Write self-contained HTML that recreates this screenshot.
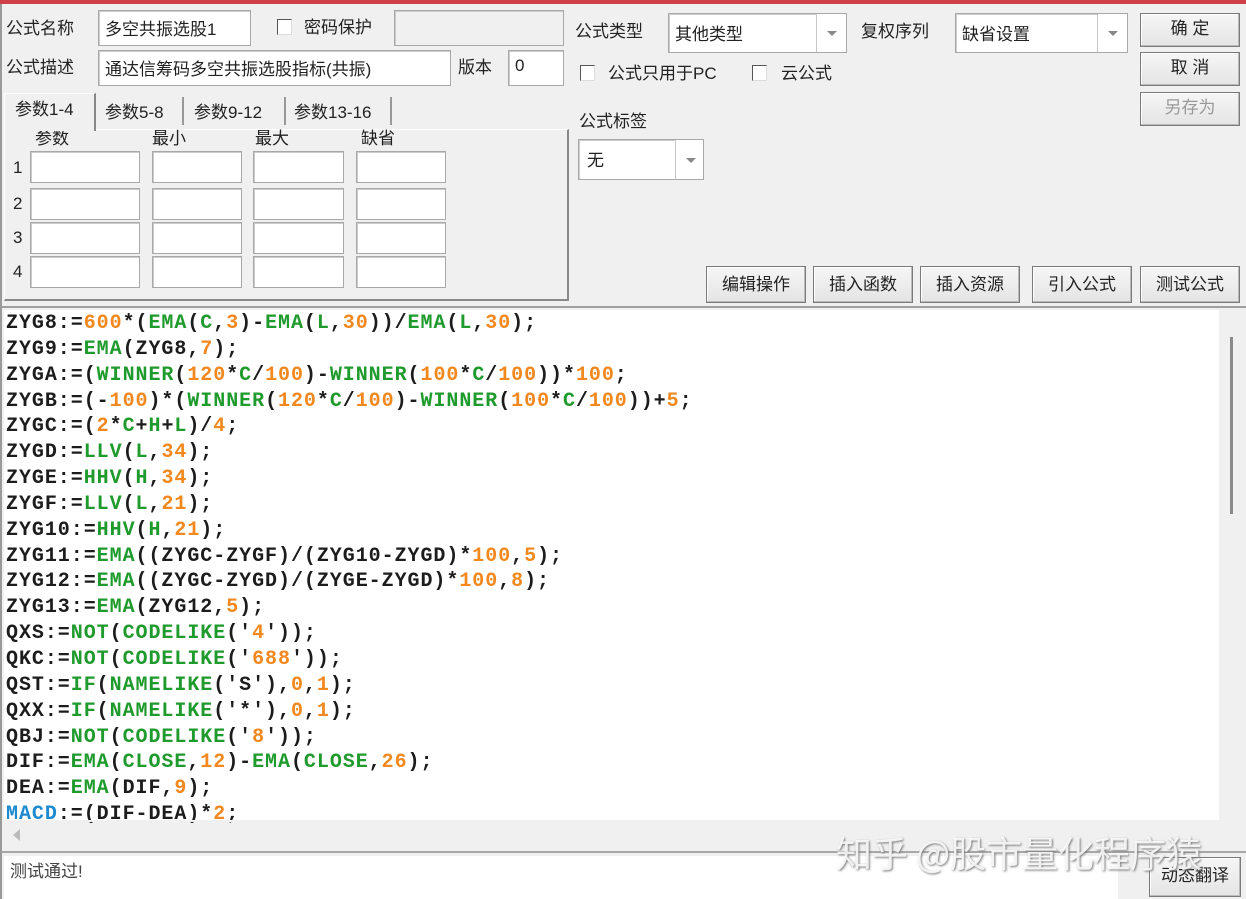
<!DOCTYPE html>
<html><head><meta charset="utf-8"><style>
*{margin:0;padding:0;box-sizing:border-box}
body{width:1246px;height:899px;background:#f0f0f0;position:relative;overflow:hidden;font-family:"Liberation Sans","Noto Sans CJK SC",sans-serif;font-size:17px;color:#222}
.a{position:absolute;white-space:nowrap}
.in{position:absolute;background:#fff;border:1px solid #a8a8a8;box-shadow:inset 1px 1px 0 #ccc}
.lbl{position:absolute;white-space:nowrap;font-size:17px;line-height:20px}
.btn{position:absolute;border:1px solid #7a7a7a;background:linear-gradient(#f6f6f6,#e4e4e4);box-shadow:inset -1px -1px 0 #bbb,inset 1px 1px 0 #fff;text-align:center;font-size:17px;line-height:30px;color:#222}
.cb{position:absolute;width:15px;height:16px;border:1px solid #555;border-right-color:#ddd;border-bottom-color:#ddd;background:#fff}
.dd{position:absolute;top:0;right:0;width:30px;height:100%;border-left:1px solid #c8c8c8;background:#fff}
.dd:after{content:"";position:absolute;left:10px;top:50%;margin-top:-2px;border-left:5px solid transparent;border-right:5px solid transparent;border-top:5px solid #888}
.code{position:absolute;left:6px;top:311px;font-family:"Liberation Mono",monospace;font-weight:bold;font-size:20px;letter-spacing:0.95px;line-height:25.85px;color:#1c1c1c;white-space:pre}
.g{color:#1f9a2c}.o{color:#f2881e}.b{color:#1d8ad0}
</style></head><body>
<div class="a" style="left:0;top:0;width:1246px;height:4px;background:#cf4049"></div>
<div class="a" style="left:0;top:4px;width:2px;height:895px;background:#9a9a9a"></div>

<div class="lbl" style="left:6px;top:19px">公式名称</div>
<div class="in" style="left:98px;top:10px;width:153px;height:36px"><span class="a" style="left:6px;top:4px">多空共振选股1</span></div>
<div class="cb" style="left:277px;top:19px"></div>
<div class="lbl" style="left:304px;top:18px">密码保护</div>
<div class="in" style="left:394px;top:10px;width:170px;height:36px;background:#f0f0f0"></div>

<div class="lbl" style="left:6px;top:58px">公式描述</div>
<div class="in" style="left:98px;top:50px;width:353px;height:36px"><span class="a" style="left:6px;top:4px">通达信筹码多空共振选股指标(共振)</span></div>
<div class="lbl" style="left:458px;top:58px">版本</div>
<div class="in" style="left:508px;top:50px;width:56px;height:36px"><span class="a" style="left:6px;top:5px">0</span></div>

<div class="a" style="left:4px;top:93px;width:92px;height:38px;border:1px solid #fff;border-right:2px solid #888;border-bottom:none;background:#f0f0f0;z-index:2"></div>
<div class="lbl" style="left:15px;top:100px;z-index:3">参数1-4</div>
<div class="lbl" style="left:105px;top:103px">参数5-8</div>
<div class="a" style="left:182px;top:97px;width:2px;height:28px;background:#999"></div>
<div class="lbl" style="left:194px;top:103px">参数9-12</div>
<div class="a" style="left:284px;top:97px;width:2px;height:28px;background:#999"></div>
<div class="lbl" style="left:294px;top:103px">参数13-16</div>
<div class="a" style="left:390px;top:97px;width:2px;height:28px;background:#999"></div>
<div class="a" style="left:4px;top:129px;width:565px;height:172px;border-top:1px solid #fff;border-left:1px solid #fff;border-right:2px solid #888;border-bottom:2px solid #888"></div>
<div class="lbl" style="left:35px;top:129px">参数</div>
<div class="lbl" style="left:152px;top:129px">最小</div>
<div class="lbl" style="left:255px;top:129px">最大</div>
<div class="lbl" style="left:361px;top:129px">缺省</div>
<div class="lbl" style="left:13px;top:158px">1</div>
<div class="lbl" style="left:13px;top:194px">2</div>
<div class="lbl" style="left:13px;top:228px">3</div>
<div class="lbl" style="left:13px;top:262px">4</div>
<div class="in" style="left:30px;top:151px;width:110px;height:32px"></div><div class="in" style="left:152px;top:151px;width:90px;height:32px"></div><div class="in" style="left:253px;top:151px;width:91px;height:32px"></div><div class="in" style="left:356px;top:151px;width:90px;height:32px"></div>
<div class="in" style="left:30px;top:188px;width:110px;height:32px"></div><div class="in" style="left:152px;top:188px;width:90px;height:32px"></div><div class="in" style="left:253px;top:188px;width:91px;height:32px"></div><div class="in" style="left:356px;top:188px;width:90px;height:32px"></div>
<div class="in" style="left:30px;top:222px;width:110px;height:32px"></div><div class="in" style="left:152px;top:222px;width:90px;height:32px"></div><div class="in" style="left:253px;top:222px;width:91px;height:32px"></div><div class="in" style="left:356px;top:222px;width:90px;height:32px"></div>
<div class="in" style="left:30px;top:256px;width:110px;height:32px"></div><div class="in" style="left:152px;top:256px;width:90px;height:32px"></div><div class="in" style="left:253px;top:256px;width:91px;height:32px"></div><div class="in" style="left:356px;top:256px;width:90px;height:32px"></div>

<div class="lbl" style="left:575px;top:22px">公式类型</div>
<div class="in" style="left:668px;top:13px;width:179px;height:40px"><span class="a" style="left:6px;top:6px">其他类型</span><div class="dd"></div></div>
<div class="lbl" style="left:861px;top:22px">复权序列</div>
<div class="in" style="left:955px;top:13px;width:173px;height:40px"><span class="a" style="left:6px;top:6px">缺省设置</span><div class="dd"></div></div>
<div class="btn" style="left:1140px;top:13px;width:100px;height:34px">确 定</div>
<div class="btn" style="left:1140px;top:52px;width:100px;height:34px">取 消</div>
<div class="btn" style="left:1140px;top:92px;width:100px;height:34px;color:#999">另存为</div>
<div class="cb" style="left:580px;top:65px"></div>
<div class="lbl" style="left:608px;top:64px">公式只用于PC</div>
<div class="cb" style="left:752px;top:65px"></div>
<div class="lbl" style="left:781px;top:64px">云公式</div>
<div class="lbl" style="left:579px;top:112px">公式标签</div>
<div class="in" style="left:578px;top:139px;width:126px;height:41px"><span class="a" style="left:8px;top:6px">无</span><div class="dd" style="width:28px"></div></div>
<div class="btn" style="left:706px;top:266px;width:100px;height:37px;line-height:35px">编辑操作</div>
<div class="btn" style="left:813px;top:266px;width:100px;height:37px;line-height:35px">插入函数</div>
<div class="btn" style="left:920px;top:266px;width:100px;height:37px;line-height:35px">插入资源</div>
<div class="btn" style="left:1032px;top:266px;width:100px;height:37px;line-height:35px">引入公式</div>
<div class="btn" style="left:1140px;top:266px;width:100px;height:37px;line-height:35px">测试公式</div>

<div class="a" style="left:2px;top:306px;width:1244px;height:2px;background:#a0a0a0"></div>
<div class="a" style="left:4px;top:310px;width:1215px;height:512px;background:#fff"></div>
<div class="a" style="left:1219px;top:310px;width:27px;height:540px;background:#f0f0f0"></div>
<div class="a" style="left:1230px;top:337px;width:3px;height:177px;background:#8a8a8a"></div>
<div class="a" style="left:4px;top:822px;width:1215px;height:27px;background:#f0f0f0"></div>
<div class="a" style="left:13px;top:829px;border-top:6px solid transparent;border-bottom:6px solid transparent;border-right:7px solid #bbb"></div>
<div class="code">ZYG8:=<span class="o">600</span>*(<span class="g">EMA</span>(<span class="g">C</span>,<span class="o">3</span>)-<span class="g">EMA</span>(<span class="g">L</span>,<span class="o">30</span>))/<span class="g">EMA</span>(<span class="g">L</span>,<span class="o">30</span>);
ZYG9:=<span class="g">EMA</span>(ZYG8,<span class="o">7</span>);
ZYGA:=(<span class="g">WINNER</span>(<span class="o">120</span>*<span class="g">C</span>/<span class="o">100</span>)-<span class="g">WINNER</span>(<span class="o">100</span>*<span class="g">C</span>/<span class="o">100</span>))*<span class="o">100</span>;
ZYGB:=(-<span class="o">100</span>)*(<span class="g">WINNER</span>(<span class="o">120</span>*<span class="g">C</span>/<span class="o">100</span>)-<span class="g">WINNER</span>(<span class="o">100</span>*<span class="g">C</span>/<span class="o">100</span>))+<span class="o">5</span>;
ZYGC:=(<span class="o">2</span>*<span class="g">C</span>+<span class="g">H</span>+<span class="g">L</span>)/<span class="o">4</span>;
ZYGD:=<span class="g">LLV</span>(<span class="g">L</span>,<span class="o">34</span>);
ZYGE:=<span class="g">HHV</span>(<span class="g">H</span>,<span class="o">34</span>);
ZYGF:=<span class="g">LLV</span>(<span class="g">L</span>,<span class="o">21</span>);
ZYG10:=<span class="g">HHV</span>(<span class="g">H</span>,<span class="o">21</span>);
ZYG11:=<span class="g">EMA</span>((ZYGC-ZYGF)/(ZYG10-ZYGD)*<span class="o">100</span>,<span class="o">5</span>);
ZYG12:=<span class="g">EMA</span>((ZYGC-ZYGD)/(ZYGE-ZYGD)*<span class="o">100</span>,<span class="o">8</span>);
ZYG13:=<span class="g">EMA</span>(ZYG12,<span class="o">5</span>);
QXS:=<span class="g">NOT</span>(<span class="g">CODELIKE</span>('<span class="o">4</span>'));
QKC:=<span class="g">NOT</span>(<span class="g">CODELIKE</span>('<span class="o">688</span>'));
QST:=<span class="g">IF</span>(<span class="g">NAMELIKE</span>('S'),<span class="o">0</span>,<span class="o">1</span>);
QXX:=<span class="g">IF</span>(<span class="g">NAMELIKE</span>('*'),<span class="o">0</span>,<span class="o">1</span>);
QBJ:=<span class="g">NOT</span>(<span class="g">CODELIKE</span>('<span class="o">8</span>'));
DIF:=<span class="g">EMA</span>(<span class="g">CLOSE</span>,<span class="o">12</span>)-<span class="g">EMA</span>(<span class="g">CLOSE</span>,<span class="o">26</span>);
DEA:=<span class="g">EMA</span>(DIF,<span class="o">9</span>);
<span class="b">MACD</span>:=(DIF-DEA)*<span class="o">2</span>;</div>
<div class="a" style="left:4px;top:820px;width:1215px;height:2px;background:#f0f0f0"></div>

<div class="a" style="left:2px;top:851px;width:1244px;height:2px;background:#a8a8a8"></div>
<div class="a" style="left:4px;top:856px;width:1114px;height:43px;background:#fff"></div>
<div class="lbl" style="left:10px;top:862px;color:#444">测试通过!</div>
<div class="btn" style="left:1149px;top:857px;width:92px;height:40px;line-height:36px">动态翻译</div>
<div class="a" style="left:836px;top:826px;font-size:36px;color:rgba(255,255,255,0.85);text-shadow:1px 1px 2px #777;font-family:'Noto Sans CJK SC',sans-serif">知乎 @股市量化程序猿</div>
</body></html>
